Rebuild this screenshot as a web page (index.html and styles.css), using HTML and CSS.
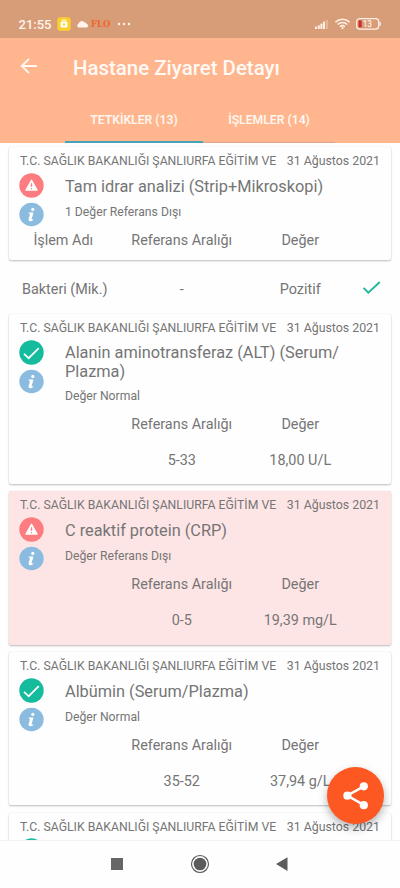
FILE: index.html
```html
<!DOCTYPE html>
<html lang="tr">
<head>
<meta charset="utf-8">
<title>Hastane Ziyaret Detayı</title>
<link rel="stylesheet" href="styles.css">
</head>
<body>
<svg class="defs" width="0" height="0">
  <symbol id="warn" viewBox="0 0 25 25"><circle cx="12.5" cy="12.5" r="12.2" fill="#fd7c80"/><path d="M12.5 6.8 18.3 17.2H6.7Z" fill="#fff" stroke="#fff" stroke-width="1" stroke-linejoin="round"/><path d="M12.5 10.2v3.6M12.5 15v1.3" stroke="#fd7c80" stroke-width="1.3"/></symbol>
  <symbol id="ok" viewBox="0 0 25 25"><circle cx="12.5" cy="12.5" r="12.2" fill="#14bb9c"/><path d="M5 13.8 9.7 18.2 19.8 8.2" fill="none" stroke="#fff" stroke-width="1.7"/></symbol>
  <symbol id="info" viewBox="0 0 25 25"><ellipse cx="12.5" cy="12.5" rx="12.2" ry="11.7" fill="#8bbce0"/><circle cx="13.8" cy="7.4" r="1.6" fill="#fff"/><path d="M9.8 10.6h4.7l-1.9 6.5q-.1.8 1.6.1l.2.7q-1.8 1.4-3.4 1.3-1.9-.2-1.4-2.1l1.3-4.7q.2-.8-1.2-.9Z" fill="#fff"/></symbol>
</svg>
<div class="screen">
  <div class="status">
    <span class="time">21:55</span>
    <svg class="bag" viewBox="0 0 14 14"><rect x=".3" y=".3" width="13.4" height="13.4" rx="3" fill="#fbd02c"/><rect x="3.6" y="4.6" width="6.8" height="6" rx="1.4" fill="#fff"/><path d="M5.4 4.6V3h3.2v1.6" stroke="#fff" fill="none"/><circle cx="7" cy="7.4" r="1.2" fill="#fbd02c"/></svg>
    <svg class="cloud" viewBox="0 0 12 8"><path d="M2.2 7.5a2 2 0 0 1-.2-3.8A3.2 3.2 0 0 1 7.7 2.3 2.4 2.4 0 0 1 10.2 4a1.8 1.8 0 0 1 0 3.5Z" fill="#fff3ea"/></svg>
    <span class="flo">FLO</span>
    <svg class="dots" viewBox="0 0 14 4" fill="#fff1e8"><circle cx="2" cy="2" r="1.25"/><circle cx="7" cy="2" r="1.25"/><circle cx="12" cy="2" r="1.25"/></svg>
    <svg class="sysicons" viewBox="0 0 70 14">
      <g fill="#fff0e6"><rect x="1" y="9.5" width="2" height="2.5" rx=".6"/><rect x="3.8" y="8.3" width="2" height="3.7" rx=".6"/><rect x="6.4" y="6.6" width="2" height="5.4" rx=".6"/><rect x="9" y="4.6" width="2" height="7.4" rx=".6"/><rect x="11.8" y="2.8" width="2" height="9.2" rx=".6" opacity=".35"/></g>
      <g fill="none" stroke="#fff0e6" stroke-width="1.5"><path d="M21.4 5.1a10.2 10.2 0 0 1 14.2 0M23.7 7.5a7 7 0 0 1 9.6 0M26 9.8a3.7 3.7 0 0 1 5 0"/></g><circle cx="28.5" cy="11.2" r="1.1" fill="#fff0e6"/>
      <rect x="42.7" y="1.7" width="22" height="10.4" rx="3" fill="none" stroke="#fff0e6" stroke-width="1.3"/><path d="M44.5 3.5h3.2v6.8h-3.2Z" fill="#d32a2c"/><path d="M66 4.8q1.4 2 0 4.2Z" fill="#fff0e6" stroke="#fff0e6" stroke-width=".6"/>
      <text x="53.3" y="9.8" font-family="Roboto" font-size="8.2" font-weight="500" text-anchor="middle" fill="#fff0e6">13</text>
    </svg>
  </div>
  <header class="bar">
    <svg class="back" viewBox="0 0 18 18"><path d="M17 9H2M9 1.8 1.8 9 9 16.2" fill="none" stroke="#fff8f3" stroke-width="1.9"/></svg>
    <h1>Hastane Ziyaret Detayı</h1>
  </header>
  <nav class="tabs">
    <div class="tab active"><span>TETKİKLER (13)</span></div>
    <div class="tab"><span>İŞLEMLER (14)</span></div>
  </nav>
  <main class="list">
    <section class="card first">
      <div class="top"><span class="org">T.C. SAĞLIK BAKANLIĞI ŞANLIURFA EĞİTİM VE</span><span class="date">31 Ağustos 2021</span></div>
      <div class="body"><div class="icons"><svg><use href="#warn"/></svg><svg><use href="#info"/></svg></div>
        <div class="words"><h2>Tam idrar analizi (Strip+Mikroskopi)</h2><p>1 Değer Referans Dışı</p></div></div>
      <div class="row"><span class="name">İşlem Adı</span><span>Referans Aralığı</span><span>Değer</span></div>
    </section>
    <div class="row loose"><span class="bak">Bakteri (Mik.)</span><span>-</span><span>Pozitif</span><svg class="tick" viewBox="0 0 20 16"><path d="M1.6 7.8 6.3 12.7 17.8 2" fill="none" stroke="#1fb89a" stroke-width="1.9"/></svg></div>
    <section class="card second">
      <div class="top"><span class="org">T.C. SAĞLIK BAKANLIĞI ŞANLIURFA EĞİTİM VE</span><span class="date">31 Ağustos 2021</span></div>
      <div class="body"><div class="icons"><svg><use href="#ok"/></svg><svg><use href="#info"/></svg></div>
        <div class="words"><h2>Alanin aminotransferaz (ALT) (Serum/<br>Plazma)</h2><p>Değer Normal</p></div></div>
      <div class="row"><span></span><span>Referans Aralığı</span><span>Değer</span></div>
      <div class="row val"><span></span><span>5-33</span><span>18,00 U/L</span></div>
    </section>
    <section class="card third">
      <div class="top"><span class="org">T.C. SAĞLIK BAKANLIĞI ŞANLIURFA EĞİTİM VE</span><span class="date">31 Ağustos 2021</span></div>
      <div class="body"><div class="icons"><svg><use href="#warn"/></svg><svg><use href="#info"/></svg></div>
        <div class="words"><h2>C reaktif protein (CRP)</h2><p>Değer Referans Dışı</p></div></div>
      <div class="row"><span></span><span>Referans Aralığı</span><span>Değer</span></div>
      <div class="row val"><span></span><span>0-5</span><span>19,39 mg/L</span></div>
    </section>
    <section class="card fourth">
      <div class="top"><span class="org">T.C. SAĞLIK BAKANLIĞI ŞANLIURFA EĞİTİM VE</span><span class="date">31 Ağustos 2021</span></div>
      <div class="body"><div class="icons"><svg><use href="#ok"/></svg><svg><use href="#info"/></svg></div>
        <div class="words"><h2>Albümin (Serum/Plazma)</h2><p>Değer Normal</p></div></div>
      <div class="row"><span></span><span>Referans Aralığı</span><span>Değer</span></div>
      <div class="row val"><span></span><span>35-52</span><span>37,94 g/L</span></div>
    </section>
    <section class="card fifth">
      <div class="top"><span class="org">T.C. SAĞLIK BAKANLIĞI ŞANLIURFA EĞİTİM VE</span><span class="date">31 Ağustos 2021</span></div>
      <div class="body"><div class="icons"><svg><use href="#ok"/></svg></div></div>
    </section>
  </main>
  <div class="share"><svg viewBox="0 0 57 57"><path d="M37 19.3 20.3 28.5 37 38.2" fill="none" stroke="#fff" stroke-width="2.5"/><g fill="#fff"><circle cx="36.8" cy="19.3" r="4.1"/><circle cx="20.4" cy="28.7" r="4.1"/><circle cx="36.8" cy="38.2" r="4.1"/></g></svg></div>
  <footer class="nav">
    <svg viewBox="0 0 400 47"><rect x="111" y="17" width="12" height="12" fill="#666"/><circle cx="200" cy="23" r="8.5" fill="none" stroke="#555" stroke-width="1.1"/><circle cx="200" cy="23" r="6.3" fill="#5c5c5c"/><path d="M276 23 287.5 16.2V30Z" fill="#5c5c5c"/></svg>
  </footer>
</div>
</body>
</html>
```
FILE: styles.css
```css
* { box-sizing: border-box; margin: 0; padding: 0; }
body { font-family: Roboto, "Liberation Sans", sans-serif; color: #757575; background: #fefefe; }
.defs { position: absolute; }
.screen { width: 400px; height: 888px; display: flex; flex-direction: column; overflow: hidden; position: relative; }
.status { height: 38px; flex: none; background: #d79c78; display: flex; align-items: center; padding: 10px 16px 0 18.5px; }
.status .time { font-size: 13px; font-weight: 500; color: #fff4ec; width: 38.5px; }
.bag { width: 14px; height: 14px; margin-right: 5px; }
.cloud { width: 13px; height: 8px; margin-right: 2px; }
.flo { font: bold 8.5px "DejaVu Serif", serif; color: #f0682c; width: 26px; }
.dots { width: 14px; height: 4px; }
.sysicons { width: 70px; height: 14px; margin-left: auto; }
.bar { height: 58px; flex: none; background: #ffb58d; display: flex; align-items: center; padding-left: 20px; }
.back { width: 18px; height: 18px; margin: -2px 35px 0 0; }
h1 { font-size: 20.45px; font-weight: 500; color: #fffaf6; white-space: nowrap; padding-top: 1px; }
.tabs { height: 47px; flex: none; background: #ffb58d; display: flex; padding-left: 65px; color: #fff6f0; font-size: 12.2px; font-weight: 600; }
.tab { width: 138px; height: 47px; text-align: center; line-height: 48px; border-bottom: 1px solid #dfa389; white-space: nowrap; }
.tab.active { border-bottom: 2px solid #47a3b8; }
.tab:last-child { width: 132px; }
.list { flex: 1; min-height: 0; overflow: hidden; padding: 4px 9px 0; }
.card { background: #fefefe; border-radius: 2px; box-shadow: 0 1px 2px rgba(0,0,0,.25), 0 0 1px rgba(0,0,0,.12); overflow: hidden; }
.top { height: 26px; padding: 2px 11px 0; display: flex; justify-content: space-between; align-items: center; font-size: 12.26px; white-space: nowrap; line-height: 20px; }
.date { font-size: 12.35px; }
.body { display: flex; padding-left: 10px; height: 55px; }
.icons { width: 46px; flex: none; display: flex; flex-direction: column; gap: 4px; }
.icons svg { width: 25px; height: 25px; display: block; flex: none; }
h2 { font-size: 16.32px; font-weight: 400; line-height: 19px; padding-top: 4px; white-space: nowrap; }
.words p { font-size: 12.2px; line-height: 16px; margin-top: 8px; }
.row { display: grid; grid-template-columns: 113.5px 118.5px 118.5px 1fr; height: 24px; line-height: 26px; font-size: 14.4px; text-align: center; white-space: nowrap; }
.name { padding-right: 5px; }
.val { margin-top: 12px; }
.first { height: 112.5px; }
.loose { height: 54.5px; line-height: 59px; }
.loose .bak { text-align: left; padding-left: 13px; }
.tick { width: 20px; height: 16px; margin: 20.5px 0 0 2px; }
.second { height: 170px; }
.second .body { height: 72px; }
.second h2 { padding-top: 3px; }
.second .words p { margin-top: 7px; }
.third { height: 153.5px; margin-top: 7px; background: #fee5e5; }
.fourth { height: 153.5px; margin-top: 7px; }
.fifth { height: 60px; margin-top: 7.5px; }
.fifth .body { margin-top: -1px; }
.nav { height: 48px; flex: none; background: #fefefe; border-top: 1px solid #f3f3f3; }
.nav svg { display: block; width: 400px; height: 47px; }
.share { position: absolute; left: 327px; top: 766.5px; width: 57px; height: 57px; border-radius: 50%; background: #fd5722; box-shadow: 0 4px 8px rgba(0,0,0,.3); }
.share svg { display: block; width: 57px; height: 57px; }
```
